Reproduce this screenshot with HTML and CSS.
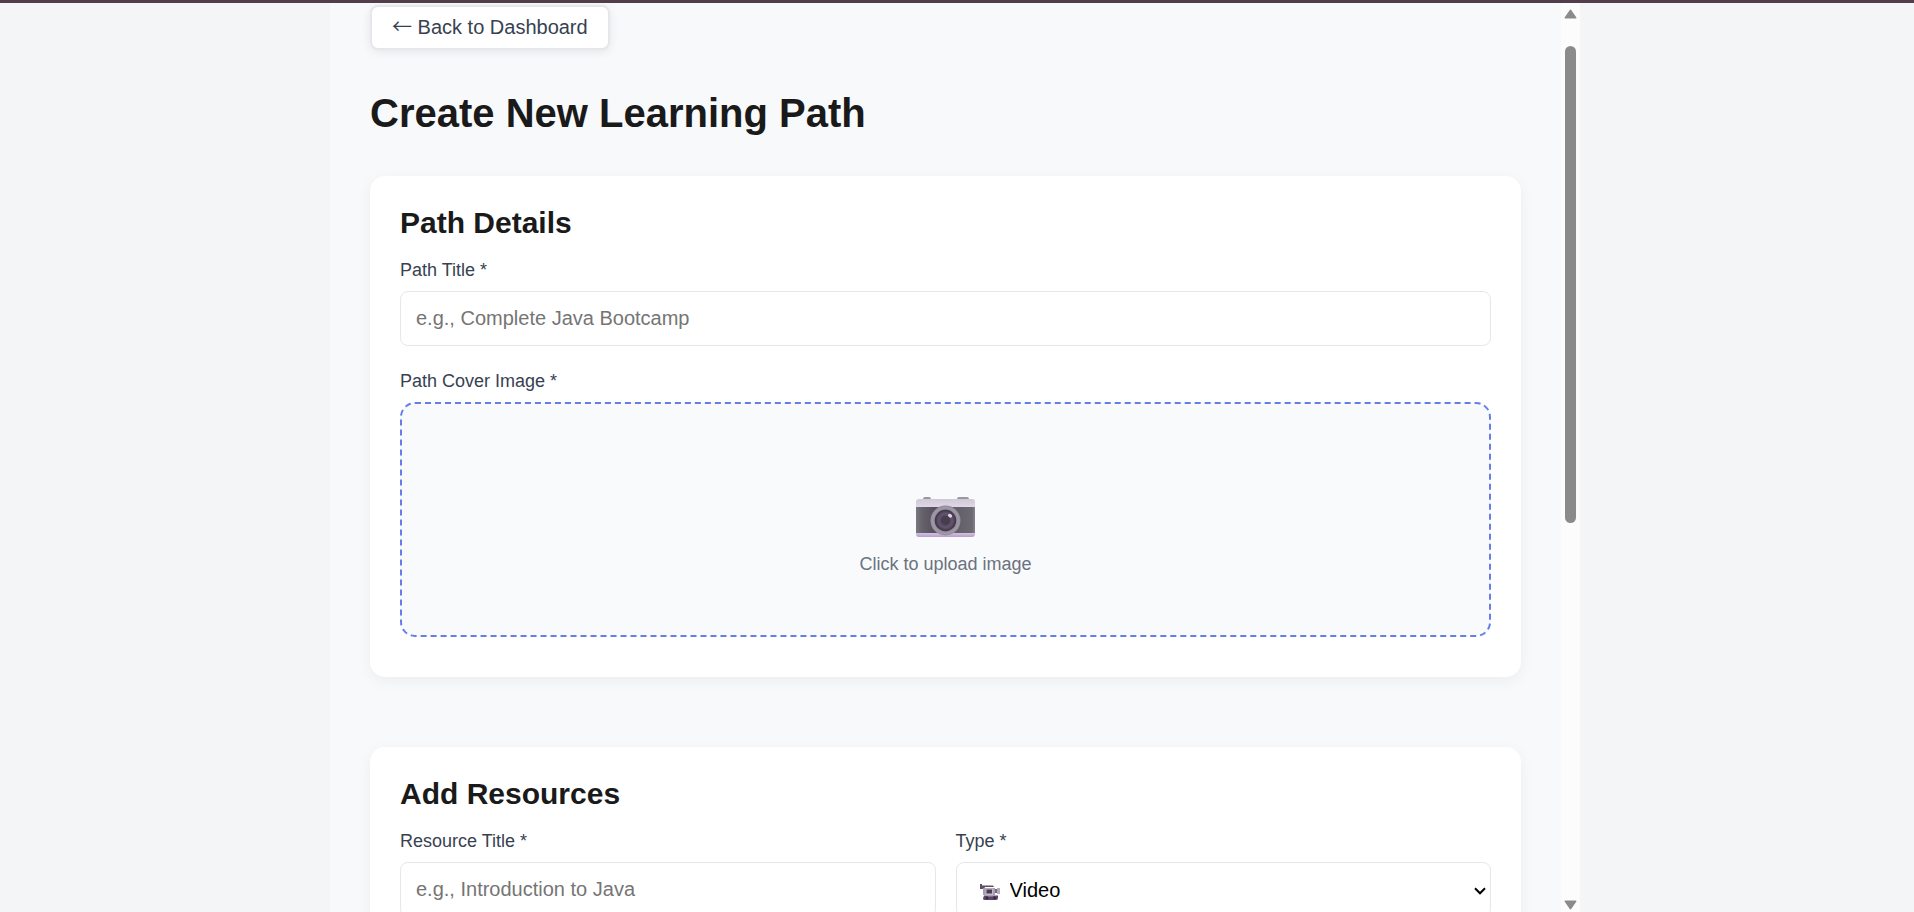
FILE: index.html
```
<!DOCTYPE html>
<html lang="en">
<head>
<meta charset="utf-8">
<title>Create New Learning Path</title>
<link rel="stylesheet" href="styles.css">
</head>
<body>
<div class="page">
  <div class="panel">
    <main class="content">
      <button class="back" type="button"><span class="back-arrow">←</span> Back to Dashboard</button>
      <h1 class="title">Create New Learning Path</h1>

      <section class="card">
        <h2 class="card-title">Path Details</h2>
        <div class="field">
          <label class="label" for="path-title">Path Title *</label>
          <input class="input" id="path-title" type="text" placeholder="e.g., Complete Java Bootcamp">
        </div>
        <div class="field">
          <span class="label" id="cover-label">Path Cover Image *</span>
          <button class="upload" type="button" aria-describedby="cover-label">
            <svg class="camera" viewBox="0 0 60 40" aria-hidden="true">
              <defs>
                <linearGradient id="top" x1="0" x2="0" y1="0" y2="1"><stop offset="0" stop-color="#cfc8d6"/><stop offset="1" stop-color="#e2d9ea"/></linearGradient>
                <linearGradient id="body" x1="0" x2="1" y1="0" y2="0"><stop offset="0" stop-color="#7b7780"/><stop offset=".1" stop-color="#66636b"/><stop offset=".3" stop-color="#57505e"/><stop offset=".75" stop-color="#65616a"/><stop offset=".95" stop-color="#6d6973"/><stop offset="1" stop-color="#87828c"/></linearGradient>
                <linearGradient id="base" x1="0" x2="0" y1="0" y2="1"><stop offset="0" stop-color="#d9cce6"/><stop offset="1" stop-color="#b79dcc"/></linearGradient>
                <radialGradient id="ring"><stop offset=".7" stop-color="#8b8592"/><stop offset=".85" stop-color="#a09aa8"/><stop offset="1" stop-color="#918b9b"/></radialGradient>
                <radialGradient id="lens"><stop offset="0" stop-color="#4b4353"/><stop offset=".4" stop-color="#51485b"/><stop offset=".65" stop-color="#64546f"/><stop offset="1" stop-color="#3c3147"/></radialGradient>
              </defs>
              <path d="M7 2Q7 0 9 0H13Q15 0 15 2V3H7ZM41 2Q41 0 43 0H51Q53 0 53 2V3H41Z" fill="#9a989c"/>
              <path d="M0 5Q0 2 3 2H56Q59 2 59 5V11H0Z" fill="url(#top)"/>
              <path d="M0 35H59V37Q59 40 56 40H3Q0 40 0 37Z" fill="url(#base)"/>
              <path d="M0 10H59V36H0Z" fill="url(#body)"/>
              <circle cx="29.500" cy="23.500" r="15" fill="url(#ring)"/>
              <circle cx="29.500" cy="23.500" r="10.700" fill="url(#lens)"/>
              <circle cx="29.500" cy="23.500" r="4.500" fill="#463e4d"/>
              <ellipse cx="34" cy="18.700" rx="2.200" ry="1.700" fill="#ddd5e4" transform="rotate(35 34 18.700)"/>
            </svg>
            <span class="upload-text">Click to upload image</span>
          </button>
        </div>
      </section>

      <section class="card">
        <h2 class="card-title">Add Resources</h2>
        <div class="columns">
          <div class="field">
            <label class="label" for="res-title">Resource Title *</label>
            <input class="input" id="res-title" type="text" placeholder="e.g., Introduction to Java">
          </div>
          <div class="field">
            <label class="label" for="res-type">Type *</label>
            <div class="select-wrap">
              <select class="input select" id="res-type"><option>Video</option></select>
              <svg class="video" viewBox="0 0 20 16" aria-hidden="true">
                <path d="M0 0H2V1.500H13L14 3H5L4 5H0Z" fill="#5b5062"/>
                <path d="M3 4H15V11H3Z" fill="#a99db3"/>
                <path d="M15 5H17V9H15Z" fill="#74697c"/>
                <path d="M17 4H20V10H17Z" fill="#b5aabf"/>
                <path d="M5.500 4.500H13V11H5.500Z" fill="#c4b9cc"/>
                <path d="M6.500 5.500H12V9.500H6.500Z" fill="#4a3f52"/>
                <path d="M4 11.500H18V14Q18 16 16 16H5Q3 16 3 14.500Z" fill="#594863"/>
                <circle cx="7" cy="14" r="1.200" fill="#33253e"/><circle cx="14.500" cy="14" r="1.200" fill="#33253e"/>
                <path d="M8 12H13V12.800H8Z" fill="#8a7a95"/>
              </svg>
              <svg class="chevron" viewBox="0 0 12 8" aria-hidden="true"><path d="M1 1.300L6 6.300L11 1.300" fill="none" stroke="#000" stroke-width="2"/></svg>
            </div>
          </div>
        </div>
      </section>
    </main>

    <div class="scrollbar" aria-hidden="true">
      <svg class="arrow" viewBox="0 0 13 10"><path d="M6.500 1.200L11.800 8.800H1.200Z" fill="#8b8b8b" stroke="#8b8b8b" stroke-width="1.400" stroke-linejoin="round"/></svg>
      <div class="track"><div class="thumb"></div></div>
      <svg class="arrow" viewBox="0 0 13 10"><path d="M6.500 8.800L11.800 1.200H1.200Z" fill="#8b8b8b" stroke="#8b8b8b" stroke-width="1.400" stroke-linejoin="round"/></svg>
    </div>
  </div>
</div>
</body>
</html>
```
FILE: styles.css
```
* {
  box-sizing: border-box;
}

body {
  margin: 0;
  font-family: "Liberation Sans", Arial, sans-serif;
  font-size: 20px;
  color: #1a1a1a;
  background: #f4f5f7;
}

.page {
  display: flex;
  justify-content: center;
  height: 100vh;
  padding-right: 4px;
  border-top: 3px solid #503f4b;
  overflow: hidden;
}

.panel {
  display: flex;
  width: 100%;
  max-width: 1250px;
  background: #f8f9fb;
}

.content {
  flex: 1;
  min-width: 0;
  padding: 2px 40px 40px;
  overflow: hidden;
}

.back {
  display: block;
  height: 45px;
  padding: 0 20px;
  border: 2px solid #e5e7eb;
  border-radius: 8px;
  background: #fff;
  box-shadow: 0 2px 10px rgba(0, 0, 0, 0.08);
  color: #374151;
  font: inherit;
  line-height: 23px;
}

.back-arrow {
  font-family: "Noto Sans CJK SC", sans-serif;
  line-height: 1;
}

.title {
  margin: 40px 0;
  font-size: 40px;
  line-height: 46px;
}

.card {
  margin-bottom: 70px;
  padding: 30px 30px 15px;
  border-radius: 15px;
  background: #fff;
  box-shadow: 0 4px 15px rgba(0, 0, 0, 0.05);
}

.card-title {
  margin: 0 0 20px;
  font-size: 30px;
  line-height: 34px;
}

.field {
  margin-bottom: 25px;
}

.label {
  display: block;
  margin-bottom: 10px;
  color: #374151;
  font-size: 18px;
  line-height: 21px;
}

.input {
  display: block;
  width: 100%;
  height: 55px;
  padding: 0 15px;
  border: 1px solid #e5e7eb;
  border-radius: 8px;
  background: #fff;
  color: #000;
  font: inherit;
}

.input::placeholder {
  color: #757575;
}

.upload {
  display: flex;
  flex-direction: column;
  align-items: center;
  width: 100%;
  height: 235px;
  padding: 93px 20px 20px;
  border: 2px dashed #667eea;
  border-radius: 15px;
  background: #f9fafc;
  color: #6b7280;
  font: inherit;
  font-size: 18px;
}

.camera {
  width: 60px;
  height: 40px;
}

.upload-text {
  margin-top: 17px;
  line-height: 21px;
}

.columns {
  display: grid;
  grid-template-columns: 1fr 1fr;
  gap: 20px;
}

.select-wrap {
  position: relative;
}

.select {
  padding-left: 53px;
  appearance: none;
}

.video {
  position: absolute;
  top: 22px;
  left: 24px;
  width: 20px;
  height: 16px;
}

.chevron {
  position: absolute;
  top: 25px;
  right: 5px;
  width: 12px;
  height: 8px;
}

.scrollbar {
  display: flex;
  flex-direction: column;
  align-items: center;
  gap: 2px;
  width: 19px;
  padding: 6px 0 2px;
  background: #fcfcfc;
}

.arrow {
  width: 13px;
  height: 10px;
}

.track {
  flex: 1;
  width: 11px;
  padding-top: 25px;
}

.thumb {
  height: 56%;
  border-radius: 6px;
  background: #8b8b8b;
}
```
